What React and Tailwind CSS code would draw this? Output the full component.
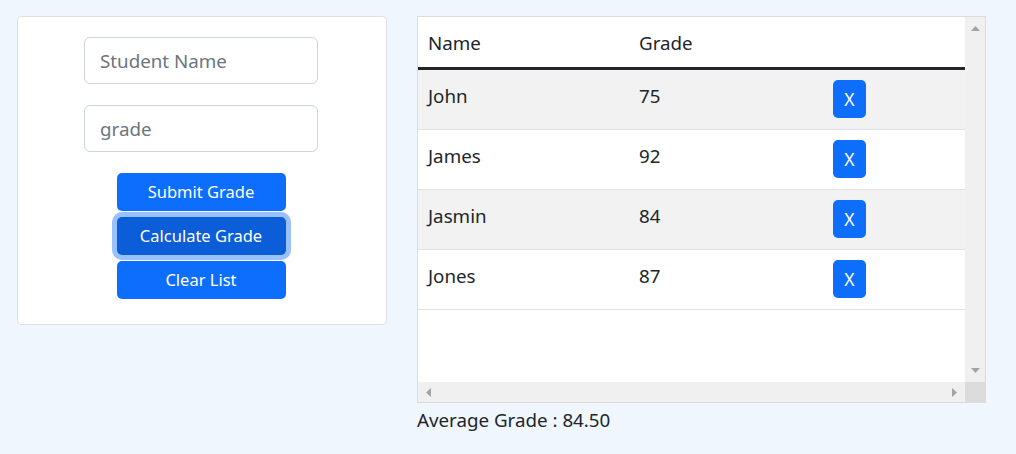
import { useState } from "react";

const students = [
  { name: "John", grade: 75 },
  { name: "James", grade: 92 },
  { name: "Jasmin", grade: 84 },
  { name: "Jones", grade: 87 },
];

function Arrow({ dir }) {
  const points = {
    up: "0,5 4.5,0 9,5",
    down: "0,0 9,0 4.5,5",
    left: "5,0 5,9 0,4.5",
    right: "0,0 0,9 5,4.5",
  }[dir];
  const vertical = dir === "up" || dir === "down";
  return (
    <svg width={vertical ? 9 : 5} height={vertical ? 5 : 9}>
      <polygon points={points} fill="#a3a3a3" />
    </svg>
  );
}

function App() {
  const [list] = useState(students);
  const avg = list.reduce((s, x) => s + x.grade, 0) / list.length;

  return (
    <div
      className="min-h-[454px] w-[1016px] bg-[#eff6fd] text-[#212529] pt-4 pl-[17px] flex items-start gap-[30px]"
      style={{ fontFamily: '"Noto Sans", "Open Sans", sans-serif' }}
    >
      {/* Form card */}
      <div className="w-[370px] bg-white border border-black/[0.125] rounded-[5px] pt-5 pb-[25px] pr-[2px] flex flex-col items-center">
        <input
          placeholder="Student Name"
          className="w-[234px] h-[47px] border border-[#ced4da] rounded-[6px] px-[15px] text-[18.75px] placeholder:text-[#6c757d] outline-none"
        />
        <input
          placeholder="grade"
          className="w-[234px] h-[47px] mt-[21px] border border-[#ced4da] rounded-[6px] px-[15px] text-[18.75px] placeholder:text-[#6c757d] outline-none"
        />
        <button className="mt-[21px] w-[169px] h-[38px] rounded-[5px] bg-[#0d6efd] text-white text-[16.5px]">
          Submit Grade
        </button>
        <button className="mt-[6px] w-[169px] h-[38px] rounded-[5px] bg-[#0b5ed7] text-white text-[16.5px] shadow-[0_0_0_5px_rgba(49,132,253,0.5)]">
          Calculate Grade
        </button>
        <button className="mt-[6px] w-[169px] h-[38px] rounded-[5px] bg-[#0d6efd] text-white text-[16.5px]">
          Clear List
        </button>
      </div>

      {/* Table */}
      <div className="w-[569px] text-[18.75px]">
        <div className="h-[387px] bg-white border border-[#dcdcdc] flex flex-col">
          <div className="flex flex-1 min-h-0">
            <div className="flex-1 overflow-hidden">
              <div className="w-[700px]">
                <div className="flex h-[53px] pt-[11px] border-b-[3px] border-[#212529]">
                  <div className="w-[211px] pl-[10px] leading-[30px]">Name</div>
                  <div className="w-[194px] pl-[10px] leading-[30px]">Grade</div>
                </div>
                {list.map((s, i) => (
                  <div
                    key={s.name}
                    className={`flex h-[60px] pt-[10px] border-b border-[#dee2e6] ${
                      i % 2 === 0 ? "bg-[#f2f2f2]" : "bg-white"
                    }`}
                  >
                    <div className="w-[211px] pl-[10px] pt-[1px] leading-[30px]">{s.name}</div>
                    <div className="w-[194px] pl-[10px] pt-[1px] leading-[30px]">{s.grade}</div>
                    <div className="pl-[10px]">
                      <button className="w-[33px] h-[38px] rounded-[5px] bg-[#0d6efd] text-white text-[17.5px] leading-[38px]">
                        X
                      </button>
                    </div>
                  </div>
                ))}
              </div>
            </div>
            {/* vertical scrollbar */}
            <div className="w-[20px] bg-[#f0f0f0] flex flex-col items-center justify-between py-[9px]">
              <Arrow dir="up" />
              <Arrow dir="down" />
            </div>
          </div>
          {/* horizontal scrollbar */}
          <div className="flex h-[20px]">
            <div className="flex-1 bg-[#f0f0f0] flex items-center justify-between px-[8px]">
              <Arrow dir="left" />
              <Arrow dir="right" />
            </div>
            <div className="w-[20px] bg-[#dcdcdc]" />
          </div>
        </div>
        <p className="mt-[2px] leading-[30px]">Average Grade : {avg.toFixed(2)}</p>
      </div>
    </div>
  );
}

export default App;
